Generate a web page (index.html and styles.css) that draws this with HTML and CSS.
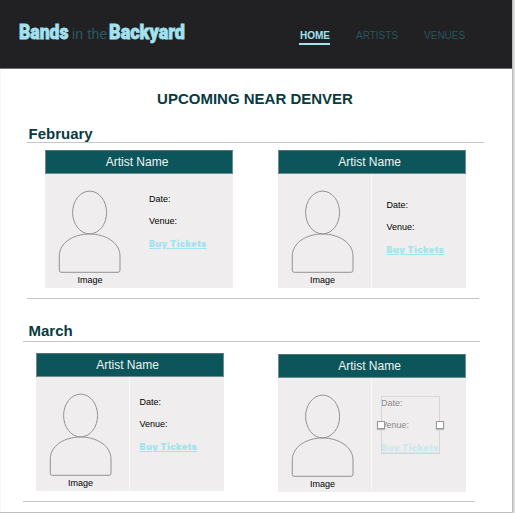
FILE: index.html
```html
<!DOCTYPE html>
<html lang="en">
<head>
<meta charset="utf-8">
<title>Bands in the Backyard</title>
<link rel="stylesheet" href="styles.css">
</head>
<body>
<svg width="0" height="0" class="defs">
  <symbol id="person" viewBox="0 0 94 90">
    <ellipse cx="44.6" cy="38.5" rx="17" ry="21.4"/>
    <path d="M14.300 82C14.300 69 28 60 44.500 60S75 69 75 82V96.300Q75 98.300 73 98.300H16.300Q14.300 98.300 14.300 96.300Z"/>
  </symbol>
</svg>
<div class="page">
  <header class="topbar">
    <div class="logo">
      <svg class="word" width="51" height="24"><text x="0" y="18" textLength="49.500" lengthAdjust="spacingAndGlyphs">Bands</text></svg>
      <span class="in">in the</span>
      <svg class="word" width="78" height="24"><text x="0" y="18" textLength="76" lengthAdjust="spacingAndGlyphs">Backyard</text></svg>
    </div>
    <nav class="nav"><a class="active">HOME</a><a>ARTISTS</a><a>VENUES</a></nav>
  </header>
  <main>
    <h1>UPCOMING NEAR DENVER</h1>
    <section class="feb">
      <h2>February</h2>
      <div class="cards">
        <article class="card plain">
          <h3>Artist Name</h3>
          <div class="body">
            <figure><svg width="94" height="102"><use href="#person" width="94" height="90"/></svg><figcaption>Image</figcaption></figure>
            <div class="details"><p>Date:</p><p>Venue:</p><a>Buy Tickets</a></div>
          </div>
        </article>
        <article class="card lower">
          <h3>Artist Name</h3>
          <div class="body">
            <figure><svg width="94" height="102"><use href="#person" width="94" height="90"/></svg><figcaption>Image</figcaption></figure>
            <div class="details"><p>Date:</p><p>Venue:</p><a>Buy Tickets</a></div>
          </div>
        </article>
      </div>
    </section>
    <section class="mar">
      <h2>March</h2>
      <div class="cards">
        <article class="card">
          <h3>Artist Name</h3>
          <div class="body">
            <figure><svg width="94" height="102"><use href="#person" width="94" height="90"/></svg><figcaption>Image</figcaption></figure>
            <div class="details"><p>Date:</p><p>Venue:</p><a>Buy Tickets</a></div>
          </div>
        </article>
        <article class="card moving">
          <h3>Artist Name</h3>
          <div class="body">
            <figure><svg width="94" height="102"><use href="#person" width="94" height="90"/></svg><figcaption>Image</figcaption></figure>
            <div class="details"><p>Date:</p><p>Venue:</p><a>Buy Tickets</a></div>
            <div class="selection"><i class="handle left"></i><i class="handle right"></i></div>
          </div>
        </article>
      </div>
    </section>
  </main>
</div>
</body>
</html>
```
FILE: styles.css
```css
* { box-sizing: border-box; }
body {
  margin: 0;
  height: 513px;
  overflow: hidden;
  background: #e6e6e6;
  font-family: "Liberation Sans", Arial, sans-serif;
}
h1, h2, h3, p, figure { margin: 0; }
.defs { display: none; }
.page {
  width: 512px;
  height: 512px;
  background: #fff;
  border-left: 1px solid #f7f7f7;
  box-shadow: 0 0 2px 1px #aaa;
  display: flow-root;
}
.topbar {
  height: 69px;
  margin-left: -1px;
  background: #212123;
  border-bottom: 1px solid #707072;
  display: flex;
  justify-content: space-between;
}
.logo { display: flex; padding: 21px 0 0 19px; height: 50px; }
.word { overflow: visible; font: 900 21px Roboto, sans-serif; fill: #a3e2f0; stroke: #a3e2f0; stroke-width: .8px; }
.in { width: 39px; padding: 1px 0 0 2px; font-size: 14px; line-height: 25px; letter-spacing: .2px; white-space: nowrap; color: #2b5b63; }
.nav { display: flex; width: 213px; padding-top: 29px; font-size: 10px; line-height: 13px; color: #27565d; }
.nav a { height: 16px; margin-right: 26px; }
.nav .active { width: 31px; padding-left: 1px; margin-right: 26px; font-weight: bold; color: #a3e2f0; border-bottom: 2px solid #a3e2f0; }
h1 { margin: 21px 3px 0 0; font-size: 15px; line-height: 18px; text-align: center; color: #083b40; }
h2 { font-size: 15px; line-height: 18px; color: #083b40; border-bottom: 1px solid #c6c6c6; }
.feb { margin: 17px 0 0 26px; width: 457px; }
.feb h2 { padding-left: 1.500px; height: 18px; }
.feb .cards { margin-top: 7px; padding-left: 18px; width: 452px; height: 149px; border-bottom: 1px solid #c6c6c6; }
.mar { margin: 23px 0 0 22px; width: 457px; }
.mar h2 { padding-left: 5.500px; height: 20px; }
.mar .cards { margin-top: 11px; padding-left: 12.500px; width: 452px; height: 149px; border-bottom: 1px solid #c6c6c6; }
.cards { display: flex; gap: 44.500px; }
.mar .cards { gap: 54px; }
.card { width: 188px; height: 138px; background: #efeded; flex: none; }
.card.moving { margin-top: 1px; }
.card h3 { height: 24px; border: 1px solid #6e8c8e; border-top-color: #4f7779; background: #0c555a; color: #eef6f6; font-size: 12px; font-weight: normal; line-height: 22px; padding-right: 4px; text-align: center; }
.body { position: relative; display: flex; height: 114px; }
figure { width: 94px; height: 114px; border-right: 1px solid #f8f8f8; }
.plain figure { border-color: transparent; }
figure svg { display: block; overflow: visible; height: 100px; fill: none; stroke: #929292; stroke-width: 1px; }
figcaption { font-size: 9px; line-height: 12px; text-align: center; padding-right: 3px; }
symbol { overflow: visible; }
.details { padding: 19px 0 0 10px; font-size: 9px; line-height: 12px; white-space: nowrap; }
.lower .details { padding: 25px 0 0 15px; }
.moving .details { padding-left: 9.500px; opacity: .45; }
.details p { margin-bottom: 10px; }
.details a { display: block; font-family: Inter, sans-serif; font-weight: 900; line-height: 13px; letter-spacing: .42px; color: #a3e2f0; text-decoration: underline; }
.selection { position: absolute; left: 103.500px; top: 18px; width: 59px; height: 58px; border: 1px solid #d6d6d6; }
.handle { position: absolute; top: 24px; width: 8px; height: 8px; background: #fff; border: 1px solid #999; box-shadow: 0 1px 1px #bbb; }
.left { left: -5px; }
.right { right: -5px; }
```
